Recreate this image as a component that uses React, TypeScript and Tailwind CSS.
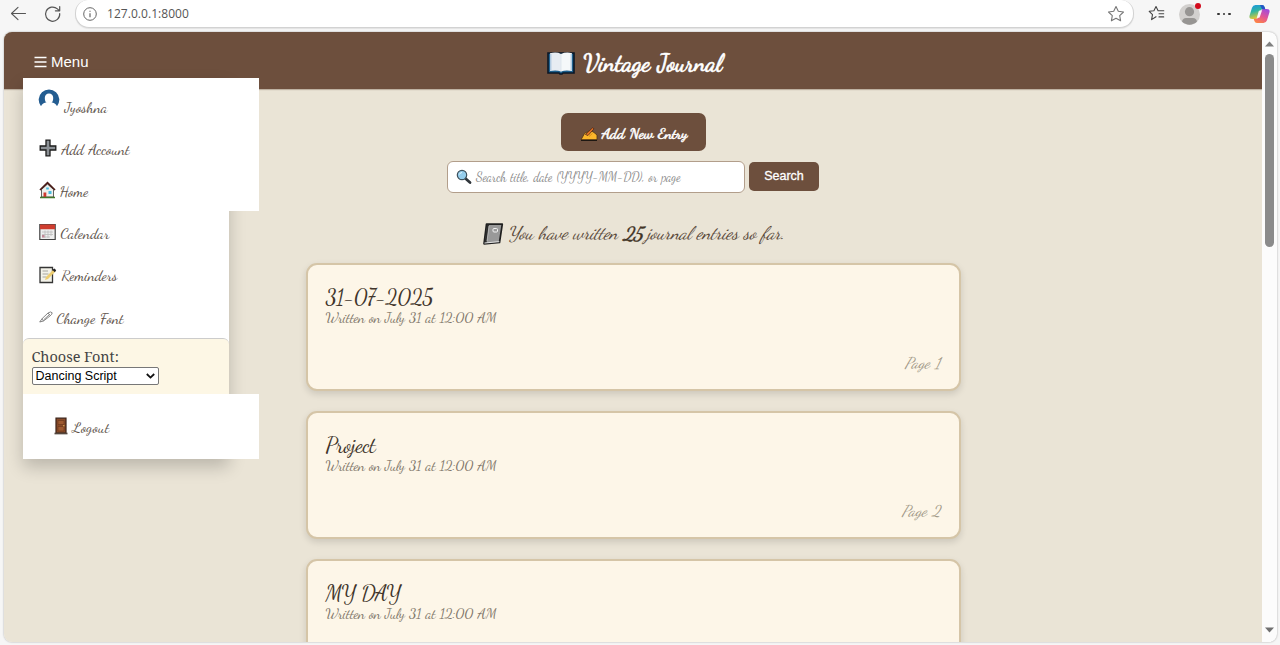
import { useLayoutEffect, useRef, type ReactNode } from "react";

const SCRIPT = "font-['Dancing_Script','Liberation_Serif',cursive]";

type FitProps = { width: number; className?: string; children: string };

/* A single line of handwriting, tracked so that it fills the given width. */
function Hand({ width, className = "", children }: FitProps) {
  const ref = useRef<HTMLSpanElement>(null);
  useLayoutEffect(() => {
    const el = ref.current;
    if (!el) return;
    el.style.letterSpacing = "0px";
    const natural = el.getBoundingClientRect().width;
    el.style.letterSpacing = `${(width - natural) / children.length}px`;
  }, [width, children]);
  return (
    <span ref={ref} className={`inline-block whitespace-pre [word-spacing:0.8px] ${SCRIPT} ${className}`}>
      {children}
    </span>
  );
}

function UserIcon() {
  return (
    <svg className="size-[22px]" viewBox="0 0 22 22">
      <path d="M3 17.200A10.300 10.300 0 1 1 19 17.200C18 14.800 16.300 14 14.300 13.500H7.700C5.500 14 4 15 3 17.200Z" fill="#245d91" />
      <path d="M6.800 9C6.800 6 8.500 4.500 11 4.500S15.200 6 15.200 9C15.200 12.500 13.500 15 11 15S6.800 12.500 6.800 9Z" fill="#fff" />
    </svg>
  );
}
function PlusIcon() {
  return (
    <svg className="size-[18px]" viewBox="0 0 18 18">
      <path d="M7 1.200H11V7H16.800V11H11V16.800H7V11H1.200V7H7Z" fill="#8b9095" stroke="#1b1b1b" strokeWidth="1.300" />
    </svg>
  );
}
function HomeIcon() {
  return (
    <svg className="h-[18px] w-[17px]" viewBox="0 0 17 18">
      <path d="M2.500 8.500 8.500 3l6 5.500V16h-12Z" fill="#eef0ed" stroke="#3b3b3b" strokeWidth=".8" />
      <path d="M1 9 8.500 1.800 16 9" fill="none" stroke="#4a1c18" strokeWidth="1.700" />
      <path d="M9.500 10h3v3h-3zM7.200 6.500h2.600v2H7.200z" fill="#47bce0" />
      <path d="M4.500 11.500h2.800V16H4.500z" fill="#cf3a31" />
      <path d="M1 16.500h15" stroke="#41782b" strokeWidth="1.700" />
    </svg>
  );
}
function CalendarIcon() {
  return (
    <svg className="h-[18px] w-[17px]" viewBox="0 0 17 18">
      <path d="M.8 1.500h15.400v15H.8Z" fill="#eee" stroke="#424242" strokeWidth="1.200" />
      <path d="M1 1.500h15v4.700H1z" fill="#cf3d2f" />
      <path d="M3 9h11M3 11.500h11M3 14h8M6 7.500V15M9 7.500V15M12 7.500V13" stroke="#bbb" strokeWidth=".8" />
      <path d="M3 12h2.500v2.500H3z" fill="#c48a98" />
    </svg>
  );
}
function MemoIcon() {
  return (
    <svg className="size-[18px]" viewBox="0 0 18 18">
      <path d="M1 1.500h12.500v15H1Z" fill="#f3f2e9" stroke="#353535" strokeWidth="1.300" />
      <path d="M3.500 5H9M3.500 8h6M3.500 11h4" stroke="#a6a6a0" />
      <path d="m6 14 1-3 7.500-7.500 2 2L9 13Z" fill="#edcd70" />
      <path d="m13.300 3.700 2.200-1.200 1.700 1.700L15.800 6.200Z" fill="#222" />
    </svg>
  );
}
function PenIcon() {
  return (
    <svg className="h-4 w-[15px]" viewBox="0 0 15 16">
      <path d="m.7 13 2.500-3.500L9 4q3-2 4.200-.2-.1 1.500-2 3L4.500 12ZM3.200 9.500l1.300 2.500M9 4l2.200 2.500M5 10.500l5.500-5" fill="none" stroke="#666" strokeWidth=".8" />
    </svg>
  );
}
function DoorIcon() {
  return (
    <svg className="h-[18px] w-[14px]" viewBox="0 0 14 18">
      <path d="M2 1.200h10V16H2z" fill="#884a28" stroke="#3b2218" strokeWidth="1.200" />
      <path d="M4 3.500h6v4H4zM4 9.500h6V14H4z" fill="#9e5a31" stroke="#6a351b" strokeWidth=".6" />
      <path d="M.5 16.500h13" stroke="#54473e" strokeWidth="1.700" />
      <circle cx="9.800" cy="8.700" r=".7" fill="#e5b258" />
    </svg>
  );
}
function BookIcon() {
  return (
    <svg className="h-6 w-7" viewBox="0 0 28 24">
      <path d="M1 2h26v20H16l-1 1h-2l-1-1H1Z" fill="#1b5d8a" stroke="#0b1726" strokeWidth="1.600" />
      <path d="M3 2.200q7-1.500 11 .8v17.500q-5-1.800-11-.4Z" fill="#e7ecf2" />
      <path d="M14 3q5-2.300 11-.8v17.900q-6-1.400-11 .4Z" fill="#f5f8fa" />
      <path d="M3.700 3v16.500M24.300 3v16.500" stroke="#b3cce2" strokeWidth="1.500" />
      <path d="M14 3v17.500" stroke="#dfe7ee" />
    </svg>
  );
}
function WritingIcon() {
  return (
    <svg className="h-4 w-[18px]" viewBox="0 0 18 16">
      <path d="M1 13.800 4.500 7.500 9 5l3 .3 2 1.200 3 2.500v4.800Z" fill="#fbb62b" stroke="#513312" strokeWidth=".8" />
      <path d="m9 10.500 3.500-3" stroke="#d98a1c" strokeWidth=".9" />
      <path d="M5.500 8.500 12.500 1.800l1.500 1L8 9.500Z" fill="#e87524" stroke="#522817" strokeWidth=".8" />
      <path d="M1 14.300h16" stroke="#1d1712" strokeWidth="1.300" />
    </svg>
  );
}
function LensIcon() {
  return (
    <svg className="size-4" viewBox="0 0 16 16">
      <path d="m9.500 9.500 4.500 4" stroke="#30363b" strokeWidth="2.800" strokeLinecap="round" />
      <circle cx="6" cy="6" r="4.700" fill="#94cdec" stroke="#3f535f" strokeWidth="1.200" />
      <path d="M3.500 5.500q.5-2 2.500-2" fill="none" stroke="#e3f6ff" />
    </svg>
  );
}
function NotebookIcon() {
  return (
    <svg className="h-[22px] w-[22px]" viewBox="0 0 22 22">
      <path d="M4.500 1.200h15.800L17.500 19.500 2 20.800Z" fill="#999" stroke="#202020" strokeWidth="1.700" strokeLinejoin="round" />
      <path d="M5 1.500 2.500 20.500l2-.3L7 1.500Z" fill="#2b2b2b" />
      <path d="M7 3 5 18" stroke="#ccc" strokeWidth=".7" />
      <rect x="11" y="5.500" width="4.500" height="3.500" rx="1" fill="#999" stroke="#f2f2f2" />
      <path d="M2.500 20 17.300 18.700" stroke="#f5f5f5" strokeWidth=".9" />
    </svg>
  );
}
function StarIcon({ lines = false }: { lines?: boolean }) {
  return (
    <svg className="size-[18px]" viewBox="0 0 18 18" fill="none" stroke={lines ? "#444" : "#777"} strokeWidth="1.100" strokeLinejoin="round" strokeLinecap="round">
      {lines ? (
        <path d="M8 11.700l-4.400 2.900.9-5L1.200 6.300l4.700-.6L8 1.500l2.100 4.200h5.700M11 8.800h4.700M11 11.900h4.700" />
      ) : (
        <path d="m9 1.500 2.300 4.800 5.200.7-3.800 3.600.9 5.200L9 13.300l-4.600 2.500.9-5.200L1.500 7l5.200-.7Z" />
      )}
    </svg>
  );
}
function CopilotIcon() {
  return (
    <svg className="h-[20px] w-[21px]" viewBox="0 0 21 20">
      <defs>
        <linearGradient id="cool" x1="0" y1="0" x2=".3" y2="1">
          <stop stopColor="#1794e5" /><stop offset=".5" stopColor="#31b5a0" /><stop offset="1" stopColor="#e6ca32" />
        </linearGradient>
        <linearGradient id="warm" x1=".7" y1="0" x2=".2" y2="1">
          <stop stopColor="#a44bd9" /><stop offset=".5" stopColor="#e45693" /><stop offset="1" stopColor="#ff873f" />
        </linearGradient>
      </defs>
      <path d="M6.500 1H13q2 0 2.600 2l.7 2.200h-2.500q-2 0-2.700 2L9 13q-.7 2-2.500 2H3.200Q-.3 15 .6 11.500L3 3.700Q3.900 1 6.500 1Z" fill="url(#cool)" />
      <path d="M14.500 19H8q-2 0-2.600-2l-.7-2.200h2.500q2 0 2.700-2L12 7q.7-2 2.500-2h3.300q3.500 0 2.600 3.500L18 16.300q-.9 2.700-3.500 2.700Z" fill="url(#warm)" />
      <path d="M11 1h2q2 0 2.600 2l.7 2.200h-3.200Z" fill="#2455c7" />
      <path d="m9.900 6.700 3.200-.5-2.500 7.300-2.900.4Z" fill="#f7f7f7" />
    </svg>
  );
}

function BrowserBar() {
  return (
    <div className="flex h-8 shrink-0 items-start bg-[#f6f6f6]">
      <div className="flex h-7 w-[75px] items-center gap-[17px] pl-[10px]">
        <svg className="h-[18px] w-[17px]" viewBox="0 0 17 18" fill="none" stroke="#555" strokeWidth="1.100" strokeLinecap="round" strokeLinejoin="round">
          <path d="M1.500 8.500h14M8 2.300 1.500 8.500 8 14.700" />
        </svg>
        <svg className="size-[18px]" viewBox="0 0 18 18" fill="none" stroke="#555" strokeWidth="1.200" strokeLinecap="round" strokeLinejoin="round">
          <path d="M15.700 8.500a7.100 7.100 0 1 1-2.300-4.600l1.900 1.700M15.700 1.500v4.300h-4.300" />
        </svg>
      </div>
      <div className="flex h-7 w-[1059px] items-center rounded-b-[14px] rounded-t-[13px] border border-t-0 border-[#d2d2d2] bg-white pl-[7px] pr-2 shadow-[0_1px_1px_rgba(0,0,0,0.08)]">
        <svg className="size-[14px]" viewBox="0 0 14 14" fill="none" stroke="#666">
          <circle cx="7" cy="7" r="6.300" /><path d="M7 6.200v4M7 3.700v1.100" strokeWidth="1.200" />
        </svg>
        <span className="ml-[10px] grow font-['Open_Sans',sans-serif] text-[12px] tracking-[0.05px] text-[#555]">127.0.0.1:8000</span>
        <StarIcon />
      </div>
      <div className="flex h-7 grow items-center pl-[14px]">
        <StarIcon lines />
        <div className="relative ml-[13px] size-[21px] overflow-visible">
          <svg className="size-[21px]" viewBox="0 0 21 21">
            <circle cx="10.500" cy="10.500" r="10.500" fill="#d2d0ce" />
            <circle cx="10.500" cy="7.700" r="4.600" fill="#979593" />
            <path d="M3 17.500q.7-3.500 4-3.500h7q3.300 0 4 3.500a10.500 10.500 0 0 1-15 0Z" fill="#979593" />
          </svg>
          <span className="absolute -right-[1px] -top-[1px] size-[6px] rounded-full bg-[#d20b1d]" />
        </div>
        <div className="ml-[17px] flex gap-[3px]">
          <i className="size-[2.500px] rounded-full bg-[#333]" /><i className="size-[2.500px] rounded-full bg-[#333]" /><i className="size-[2.500px] rounded-full bg-[#333]" />
        </div>
        <div className="ml-[18px]"><CopilotIcon /></div>
      </div>
    </div>
  );
}

type Item = { icon: ReactNode; label: string; width: number; gap: string };
function MenuRow({ icon, label, width, gap }: Item) {
  return (
    <li className="flex h-[42.200px] items-center pl-4">
      {icon}
      <span className={gap}><Hand width={width} className="text-[15px] text-[#5b5047]">{label}</Hand></span>
    </li>
  );
}

function Menu() {
  return (
    <div className="absolute left-[18.500px] top-[46px] z-10 w-[206px] bg-white shadow-[0_8px_16px_rgba(0,0,0,0.2)]">
      <ul className="relative w-[236px] bg-white">
        <li className="flex h-[49px] items-start pl-[15px] pt-[11px]">
          <UserIcon />
          <span className="ml-[5px] mt-[5px]"><Hand width={43} className="text-[15px] text-[#5b5047]">Jyoshna</Hand></span>
        </li>
        <MenuRow icon={<PlusIcon />} label="Add Account" width={68} gap="ml-[5px]" />
        <MenuRow icon={<HomeIcon />} label="Home" width={29} gap="ml-[4px]" />
      </ul>
      <ul>
        <MenuRow icon={<CalendarIcon />} label="Calendar" width={49} gap="ml-[5px]" />
        <MenuRow icon={<MemoIcon />} label="Reminders" width={56} gap="ml-[5px]" />
        <MenuRow icon={<PenIcon />} label="Change Font" width={67} gap="ml-[3px]" />
      </ul>
      <div className="h-[56px] rounded-t-[6px] border-t border-[#ccc] bg-[#fdf7e5] pl-[9px] pt-[8px]">
        <div className="h-[19px] font-['Noto_Serif','DejaVu_Serif',serif] text-[14.500px] leading-[19px] tracking-[-0.050px] text-[#444]">Choose Font:</div>
        <div className="mt-px flex h-[18px] w-[127.500px] items-center justify-between rounded-[2px] border border-[#777] bg-white px-[3px] font-['Liberation_Sans',sans-serif] text-[12.500px] text-black">
          <span>Dancing Script</span>
          <svg className="h-[6px] w-[9px]" viewBox="0 0 9 6"><path d="m.8 1 3.700 3.600L8.200 1" fill="none" stroke="#111" strokeWidth="1.800" /></svg>
        </div>
      </div>
      <div className="relative flex h-[65px] w-[236px] items-center bg-white pl-[31px]">
        <DoorIcon />
        <span className="ml-[5px]"><Hand width={37} className="text-[15px] text-[#5b5047]">Logout</Hand></span>
      </div>
    </div>
  );
}

const entries = [
  { title: "31-07-2025", width: 107, page: "Page 1", pageWidth: 36 },
  { title: "Project", width: 50, page: "Page 2", pageWidth: 39 },
  { title: "MY DAY", width: 75 },
];

export default function App() {
  return (
    <div className="flex h-[645px] w-[1280px] flex-col overflow-hidden bg-[#f6f6f6]">
      <BrowserBar />
      <div className="ml-[4px] flex h-[610px] w-[1273px] overflow-hidden rounded-lg bg-[#fcfcfc] shadow-[0_0_2px_rgba(0,0,0,0.35)]">
        <div className="relative h-full w-[1258px] shrink-0 overflow-hidden bg-[#eae4d6]">
          <header className="relative flex h-[57px] items-center justify-center bg-[#6d4f3d] shadow-[0_1px_1px_rgba(90,60,40,0.3)]">
            <button className="absolute left-[30px] top-[20px] flex items-center gap-1 font-['Liberation_Sans',sans-serif] text-[15px] leading-5 text-white">
              <svg className="h-[12px] w-[13px]" viewBox="0 0 13 12"><path d="M.5 1.500h12M.5 6h12M.5 10.500h12" stroke="#fff" strokeWidth="1.300" /></svg>
              Menu
            </button>
            <h1 className="flex items-center gap-2 pl-[3px] pt-[5px]">
              <BookIcon />
              <Hand width={139} className="mt-px text-[24px] font-bold text-white [-webkit-text-stroke:0.500px_white]">Vintage Journal</Hand>
            </h1>
          </header>
          <Menu />
          <main className="flex flex-col items-center">
            <button className="mt-[24px] flex h-[38px] w-[145px] items-center justify-center gap-[4px] rounded-[7px] bg-[#6d4f3d] pl-px pt-[3px]">
              <WritingIcon />
              <Hand width={86} className="text-[15px] font-bold text-white [-webkit-text-stroke:0.400px_white]">Add New Entry</Hand>
            </button>
            <div className="mt-[10px] flex items-start gap-[4px]">
              <div className="flex h-[32px] w-[298px] items-center gap-[4px] rounded-[6px] border border-[#b29e8b] bg-white pl-[8px]">
                <LensIcon />
                <Hand width={205} className="text-[12.500px] text-[#888]">Search title, date (YYYY-MM-DD), or page</Hand>
              </div>
              <button className="mt-px h-[29px] w-[70px] rounded-[5px] bg-[#6d4f3d] font-['Liberation_Sans',sans-serif] text-[12.500px] text-white [-webkit-text-stroke:0.300px_white]">Search</button>
            </div>
            <div className="mt-[29px] mb-px flex h-[24px] items-center text-[#5a4a3b]">
              <NotebookIcon />
              <Hand width={110} className="ml-[4px] text-[18.500px] italic">You have written</Hand>
              <Hand width={19} className="ml-[5px] text-[19px] font-bold italic text-[#423426] [-webkit-text-stroke:0.300px_#423426]">25</Hand>
              <Hand width={138} className="ml-[5px] text-[18.500px] italic">journal entries so far.</Hand>
            </div>
            <div className="mt-[16px] flex flex-col gap-[20px]">
              {entries.map((entry) => (
                <article key={entry.title} className="flex h-[128px] w-[655px] flex-col rounded-[11px] border-2 border-[#d5c5a7] bg-[#fdf6e8] px-[18px] shadow-[0_3px_7px_rgba(0,0,0,0.13)]">
                  <div className="mt-[19px] h-[24px] leading-[26px]">
                    <Hand width={entry.width} className="text-[22px] text-[#40342a]">{entry.title}</Hand>
                  </div>
                  <div className="h-[16px] leading-[16px]">
                    <Hand width={171} className="text-[14.500px] text-[#81776a]">Written on July 31 at 12:00 AM</Hand>
                  </div>
                  {entry.page && (
                    <div className="mt-[28px] self-end leading-[20px]">
                      <Hand width={entry.pageWidth} className="text-[15.500px] italic text-[#a09686]">{entry.page}</Hand>
                    </div>
                  )}
                </article>
              ))}
            </div>
          </main>
        </div>
        <div className="flex grow flex-col items-center pt-[9px]">
          <svg className="h-[6px] w-[9px]" viewBox="0 0 9 6"><path d="M0 5.500 4.500.5 9 5.500Z" fill="#808080" /></svg>
          <div className="mt-[7px] h-[193px] w-[9px] rounded-full bg-[#8b8b8b]" />
          <div className="grow" />
          <svg className="mb-[9px] h-[6px] w-[9px]" viewBox="0 0 9 6"><path d="M0 .5 4.500 5.500 9 .5Z" fill="#707070" /></svg>
        </div>
      </div>
    </div>
  );
}
